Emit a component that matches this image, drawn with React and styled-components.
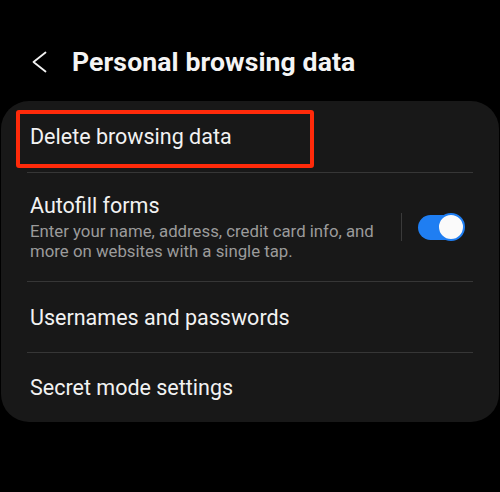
import React from "react";
import styled, { createGlobalStyle } from "styled-components";

const Global = createGlobalStyle`
  html, body { margin: 0; padding: 0; background: #000; }
  body { font-family: Roboto, "Noto Sans", sans-serif; color: #f2f2f2; }
`;

const Page = styled.div`
  width: 500px;
  height: 492px;
  background: #000;
  display: flex;
  flex-direction: column;
`;

const Header = styled.header`
  height: 101px;
  display: flex;
  align-items: center;
  padding-left: 31px;
  padding-top: 22px;
  gap: 24px;
  box-sizing: border-box;
`;

const Title = styled.h1`
  margin: 0;
  font-size: 26.6px;
  font-weight: 700;
  color: #f4f4f4;
  letter-spacing: 0.1px;
`;

const Card = styled.section`
  margin: 0 1px;
  background: #181818;
  border-radius: 28px;
  padding: 0 26px;
  display: flex;
  flex-direction: column;
`;

const Row = styled.div`
  position: relative;
  height: ${(p) => p.$h}px;
  display: flex;
  align-items: center;
  padding-left: 3px;
  box-sizing: border-box;
`;

const Divider = styled.div`
  height: 1px;
  background: #363636;
`;

const Label = styled.div`
  font-size: 21.5px;
  color: #f2f2f2;
`;

const TextCol = styled.div`
  flex: 1;
  display: flex;
  flex-direction: column;
  gap: 3px;
`;

const Sub = styled.div`
  font-size: 16.8px;
  line-height: 20px;
  color: #9b9b9b;
  width: 360px;
`;

const Highlight = styled.div`
  position: absolute;
  left: -11px;
  top: 9px;
  width: 298px;
  height: 58px;
  border: 4px solid #ff2a0a;
  border-radius: 3px;
  box-sizing: border-box;
  pointer-events: none;
`;

const VLine = styled.div`
  width: 1px;
  height: 28px;
  background: #3a3a3a;
  margin-right: 16px;
`;

const Track = styled.div`
  position: relative;
  width: 46px;
  height: 25px;
  border-radius: 13px;
  background: #1f7ef2;
  margin-right: 9px;
`;

const Thumb = styled.div`
  position: absolute;
  right: -1px;
  top: -1.5px;
  width: 28px;
  height: 28px;
  border-radius: 50%;
  background: #fafafa;
  box-sizing: border-box;
  border: 2px solid #1f7ef2;
`;

const Back = () => (
  <svg width="17" height="24" viewBox="0 0 17 24" fill="none">
    <path d="M14.5 2.5 L2.5 12 L14.5 21.5" stroke="#f2f2f2" strokeWidth="1.8" strokeLinecap="round" strokeLinejoin="round" />
  </svg>
);

export default function App() {
  return (
    <Page>
      <Global />
      <Header>
        <Back />
        <Title>Personal browsing data</Title>
      </Header>
      <Card>
        <Row $h={71}>
          <Label>Delete browsing data</Label>
          <Highlight />
        </Row>
        <Divider />
        <Row $h={108}>
          <TextCol>
            <Label>Autofill forms</Label>
            <Sub>Enter your name, address, credit card info, and more on websites with a single tap.</Sub>
          </TextCol>
          <VLine />
          <Track>
            <Thumb />
          </Track>
        </Row>
        <Divider />
        <Row $h={70}>
          <Label>Usernames and passwords</Label>
        </Row>
        <Divider />
        <Row $h={69}>
          <Label>Secret mode settings</Label>
        </Row>
      </Card>
    </Page>
  );
}
